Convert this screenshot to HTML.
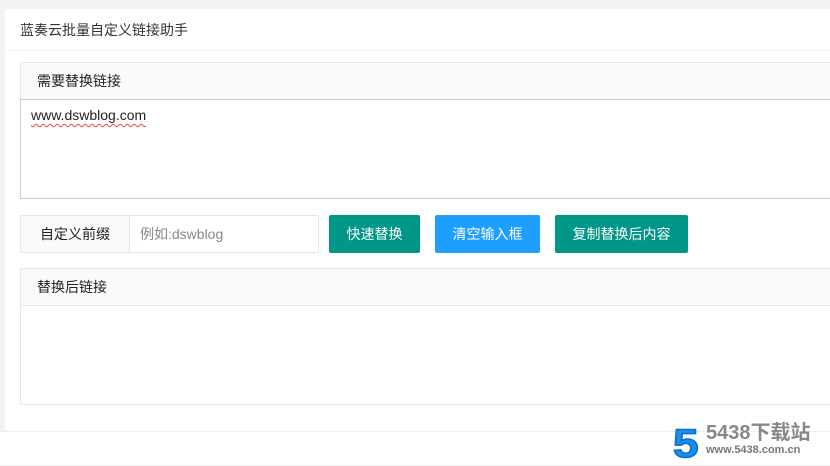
<!DOCTYPE html>
<html><head><meta charset="utf-8"><style>
*{box-sizing:border-box;margin:0;padding:0}
body{width:830px;height:465px;background:#f2f2f2;font-family:"Liberation Sans","Noto Sans CJK SC",sans-serif;font-size:14px;color:#333;position:relative;overflow:hidden}
.card{position:absolute;left:5px;top:9px;width:830px;height:422px;background:#fff;border-radius:2px}
.title{height:42px;line-height:42px;padding-left:15px;border-bottom:1px solid #f0f0f0;font-size:14px;color:#333}
.panel{position:absolute;left:15px;width:820px;border:1px solid #e6e6e6;border-radius:2px}
.ph{height:37px;line-height:36px;background:#fafafa;border-bottom:1px solid #e6e6e6;padding-left:16px;color:#222}
.p1{top:53px;height:137px}
.p1 .ph{border-bottom:1px solid #ccc}
.p1 .body{border:1px solid #ccc;border-top:none;margin:-1px -1px 0 -1px;height:100px;padding:8px 10px;color:#222}
.p1 .body span{text-decoration:underline wavy #e44;text-decoration-thickness:1px;text-underline-offset:3px}
.p2{top:259px;height:137px}
.lab{position:absolute;left:15px;top:206px;width:110px;height:38px;border:1px solid #e6e6e6;background:#fafafa;line-height:36px;text-align:center;color:#222;border-radius:2px 0 0 2px}
.inp{position:absolute;left:124px;top:206px;width:190px;height:38px;border:1px solid #e6e6e6;line-height:36px;padding-left:10px;color:#888;border-radius:0 2px 2px 0}
.btn{position:absolute;top:206px;height:38px;line-height:38px;color:#fff;text-align:center;border-radius:2px}
.bot{position:absolute;left:0;top:431px;width:830px;height:34px;background:#fff;border-top:1px solid #eee}
</style></head><body>
<div class="card">
<div class="title">蓝奏云批量自定义链接助手</div>
<div class="panel p1"><div class="ph">需要替换链接</div><div class="body"><span>www.dswblog.com</span></div></div>
<div class="lab">自定义前缀</div>
<div class="inp">例如:dswblog</div>
<div class="btn" style="left:324px;width:91px;background:#009688">快速替换</div>
<div class="btn" style="left:430px;width:105px;background:#1E9FFF">清空输入框</div>
<div class="btn" style="left:550px;width:133px;background:#009688">复制替换后内容</div>
<div class="panel p2"><div class="ph">替换后链接</div></div>
</div>
<div class="bot"></div>
<div style="position:absolute;left:673px;top:424px;font:bold 40px 'Liberation Sans',sans-serif;line-height:40px;color:#1a8ee8;-webkit-text-stroke:1.5px #0a6fd0;transform:scaleX(1.15);transform-origin:left">5</div>
<div style="position:absolute;left:706px;top:422px;font:bold 20px 'Liberation Sans','Noto Sans CJK SC',sans-serif;color:#888;line-height:22px">5438下载站</div>
<div style="position:absolute;left:706px;top:444px;font:bold 11px 'Liberation Sans',sans-serif;color:#777;line-height:12px">www.5438.com.cn</div>
</body></html>
